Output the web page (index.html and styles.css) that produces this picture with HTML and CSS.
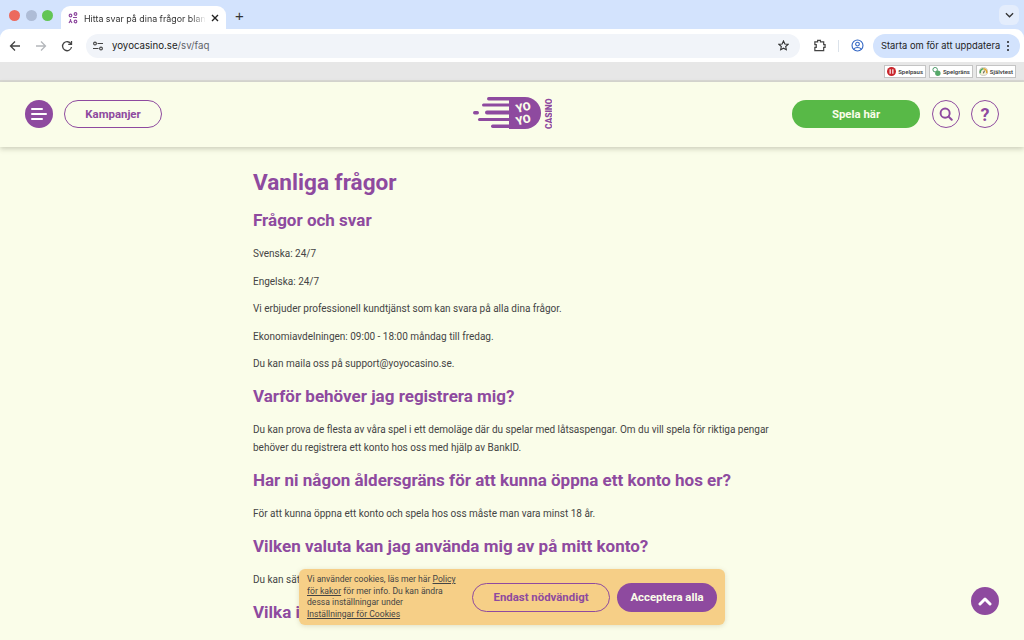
FILE: index.html
```html
<!DOCTYPE html>
<html lang="sv">
<head>
<meta charset="utf-8">
<title>Vanliga frågor</title>
<link rel="stylesheet" href="styles.css">
</head>
<body>
<div class="tabstrip">
  <div class="lights"><i class="light red"></i><i class="light grey"></i><i class="light green"></i></div>
  <div class="tab">
    <svg class="favicon" viewBox="0 0 10 12" width="10" height="12"><g fill="none" stroke="#8e4a9f" stroke-width="1.200"><circle cx="2.500" cy="3.500" r="1.300"/><circle cx="7.500" cy="2" r="1.300"/><circle cx="7.500" cy="9.500" r="1.300"/><path d="M1 11l1.500-2.500L4 11M2.500 8.500V7M5 5.500h4"/></g></svg>
    <span class="tabtitle">Hitta svar på dina frågor blan</span>
    <svg class="tabclose" viewBox="0 0 8 8" width="8" height="8"><path d="M1 1l6 6M7 1L1 7" stroke="#222" stroke-width="1.400"/></svg>
  </div>
  <span class="newtab">+</span>
  <span class="spacer"></span>
  <span class="tabmenu"><svg viewBox="0 0 10 6" width="9" height="6"><path d="M1 1l4 4 4-4" fill="none" stroke="#333" stroke-width="1.400"/></svg></span>
</div>
<div class="toolbar">
  <svg class="navicon" viewBox="0 0 12 12" width="12" height="12"><path d="M11 6H2M6 1.500L1.500 6 6 10.500" fill="none" stroke="#444" stroke-width="1.300"/></svg>
  <svg class="navicon" viewBox="0 0 12 12" width="12" height="12"><path d="M1 6h9M6 1.500L10.500 6 6 10.500" fill="none" stroke="#b4b7bb" stroke-width="1.300"/></svg>
  <svg class="navicon" viewBox="0 0 12 12" width="12" height="12"><path d="M10 4A4.500 4.500 0 1 0 10.500 7M10.500 1v3.300H7.200" fill="none" stroke="#444" stroke-width="1.300"/></svg>
  <div class="omnibox">
    <svg class="tune" viewBox="0 0 12 10" width="12" height="10"><g fill="none" stroke="#444" stroke-width="1.100"><circle cx="3" cy="2.500" r="1.400"/><circle cx="9" cy="7.500" r="1.400"/><path d="M5.500 2.500H11M1 7.500h5.500"/></g></svg>
    <span class="url">yoyocasino.se<span class="urlpath">/sv/faq</span></span>
    <span class="spacer"></span>
    <svg viewBox="0 0 12 12" width="11" height="11"><path d="M6 1l1.500 3.300 3.500.4-2.600 2.400.7 3.500L6 8.900l-3.100 1.700.7-3.500L1 4.700l3.500-.4z" fill="none" stroke="#333" stroke-width="1.200"/></svg>
  </div>
  <svg class="ext" viewBox="0 0 14 14" width="13" height="13"><path d="M2 3h3V1.500h3V3h3.500v3H13v3h-1.500v3.500H2V9h1.500V6H2z" fill="none" stroke="#444" stroke-width="1.300"/></svg>
  <i class="sep"></i>
  <svg class="profile" viewBox="0 0 14 14" width="13" height="13"><g fill="none" stroke="#3367c4" stroke-width="1.200"><circle cx="7" cy="7" r="5.900"/><circle cx="7" cy="5.500" r="2"/><path d="M3 11c1.500-2.400 6.500-2.400 8 0"/></g></svg>
  <div class="update"><span>Starta om för att uppdatera</span><b class="dots"><i></i><i></i><i></i></b></div>
</div>
<div class="gambling">
  <span class="gbadge"><svg viewBox="0 0 10 10" width="9" height="9"><circle cx="5" cy="5" r="5" fill="#c9252c"/><path d="M3.500 2.500v5M6.500 2.500v5" stroke="#fff" stroke-width="1.300"/></svg>Spelpaus</span>
  <span class="gbadge"><svg viewBox="0 0 10 10" width="9" height="9"><circle cx="3.500" cy="3" r="2.500" fill="none" stroke="#3b8f5b"/><circle cx="6.500" cy="7" r="3" fill="#55a868"/></svg>Spelgräns</span>
  <span class="gbadge"><svg viewBox="0 0 10 10" width="9" height="9"><circle cx="5" cy="5" r="4.500" fill="#f4f0d8" stroke="#aaa" stroke-width=".6"/><path d="M1.500 7a3.800 3.800 0 0 1 3.500-5" fill="none" stroke="#4ba55a" stroke-width="1.600"/><path d="M5 2a3.800 3.800 0 0 1 3.500 5" fill="none" stroke="#e2a52e" stroke-width="1.600"/><path d="M5 7l1-3" stroke="#333"/></svg>Självtest</span>
</div>
<header class="site">
  <div class="siteleft">
    <button class="burger"><i class="l1"></i><i class="l2"></i><i class="l3"></i></button>
    <button class="outline promo">Kampanjer</button>
  </div>
  <div class="logo">
    <svg viewBox="0 0 80 36" width="80" height="36">
      <path d="M37 1h16a16 16 0 0 1 0 32H37z" fill="#8e4a9f"/>
      <g fill="#8e4a9f">
        <rect x="15" y="1" width="26" height="3.500" rx="1.700"/>
        <rect x="10" y="7.500" width="30" height="3" rx="1.500"/>
        <rect x="1" y="15" width="6" height="3.500" rx="1.700"/>
        <rect x="13" y="14.500" width="27" height="4" rx="2"/>
        <rect x="6" y="22" width="33" height="3" rx="1.500"/>
        <rect x="19" y="28.500" width="22" height="3.500" rx="1.700"/>
      </g>
      <text x="45" y="17" class="logotext" transform="rotate(-14 45 17)">YO</text>
      <text x="45" y="29.500" class="logotext" transform="rotate(-14 45 29.500)">YO</text>
      <text x="0" y="0" class="logocasino" transform="translate(79.500 33) rotate(-90)">CASINO</text>
    </svg>
  </div>
  <div class="siteright">
    <button class="play">Spela här</button>
    <button class="round"><svg viewBox="0 0 16 16" width="14" height="14"><circle cx="7" cy="7" r="5.200" fill="none" stroke="#8e4a9f" stroke-width="2.200"/><path d="M11 11l3.500 3.500" stroke="#8e4a9f" stroke-width="2.400" stroke-linecap="round"/></svg></button>
    <button class="round help">?</button>
  </div>
</header>
<main class="content">
  <h1>Vanliga frågor</h1>
  <h2>Frågor och svar</h2>
  <p>Svenska: 24/7</p>
  <p>Engelska: 24/7</p>
  <p>Vi erbjuder professionell kundtjänst som kan svara på alla dina frågor.</p>
  <p>Ekonomiavdelningen: 09:00 - 18:00 måndag till fredag.</p>
  <p>Du kan maila oss på support@yoyocasino.se.</p>
  <h2>Varför behöver jag registrera mig?</h2>
  <p>Du kan prova de flesta av våra spel i ett demoläge där du spelar med låtsaspengar. Om du vill spela för riktiga pengar behöver du registrera ett konto hos oss med hjälp av BankID.</p>
  <h2>Har ni någon åldersgräns för att kunna öppna ett konto hos er?</h2>
  <p>För att kunna öppna ett konto och spela hos oss måste man vara minst 18 år.</p>
  <h2>Vilken valuta kan jag använda mig av på mitt konto?</h2>
  <p>Du kan sätta in och spela i svenska kronor på ditt konto.</p>
  <h2>Vilka insättningsmetoder finns?</h2>
</main>
<aside class="cookie">
  <p>Vi använder cookies, läs mer här <a href="#">Policy för kakor</a> för mer info. Du kan ändra dessa inställningar under<br><a href="#">Inställningar för Cookies</a></p>
  <button class="outline necessary">Endast nödvändigt</button>
  <button class="accept">Acceptera alla</button>
</aside>
<button class="totop"><svg viewBox="0 0 14 9" width="14" height="9"><path d="M2 7l5-5 5 5" fill="none" stroke="#fff" stroke-width="3" stroke-linecap="round" stroke-linejoin="round"/></svg></button>
</body>
</html>
```
FILE: styles.css
```css
* { box-sizing: border-box; }
html, body { height: 100%; }
body { margin: 0; height: 640px; overflow: hidden; background: #fafde9; font-family: Roboto, "Liberation Sans", sans-serif; color: #444; position: relative; }
button { font-family: inherit; cursor: pointer; padding: 0; }
.spacer { flex: 1; }

.tabstrip { height: 37px; background: #d3e3fd; display: flex; align-items: flex-end; padding: 0 5px 8px 9px; }
.lights { display: flex; gap: 5.500px; align-self: center; margin-top: 1px; margin-right: 8px; }
.light { width: 11px; height: 11px; border-radius: 50%; display: block; }
.red { background: #ec6a5e; }
.grey { background: #aebcd6; }
.green { background: #62c554; }
.tab { width: 165px; height: 24px; background: #fff; border-radius: 9px 9px 0 0; display: flex; align-items: center; padding: 0 7px; font-size: 8.900px; color: #333; font-family: Inter, Roboto, sans-serif; position: relative; z-index: 1; margin-bottom: -1px; }
.favicon { flex: none; margin-right: 6px; }
.tabtitle { width: 122px; overflow: hidden; white-space: nowrap; flex: none; -webkit-mask-image: linear-gradient(to right, #000 88%, transparent); mask-image: linear-gradient(to right, #000 88%, transparent); }
.tabclose { flex: none; margin-left: 5px; }
.newtab { align-self: center; margin-left: 9px; font-size: 15px; color: #333; margin-top: 1px; font-family: "Liberation Sans", sans-serif; line-height: 1; }
.tabmenu { align-self: center; width: 20px; height: 20px; border-radius: 6px; background: #e4edfc; display: flex; align-items: center; justify-content: center; margin-top: 1px; }

.toolbar { height: 33px; background: #fff; border-radius: 9px 9px 0 0; margin-top: -8px; position: relative; display: flex; align-items: center; padding: 0 4px 0 9px; }
.navicon { flex: none; margin-right: 14px; }
.navicon:nth-child(3) { margin-right: 13px; }
.omnibox { width: 714px; height: 24px; background: #f1f4f9; border-radius: 12px; display: flex; align-items: center; padding: 0 11px 0 6px; }
.tune { margin-right: 8px; }
.url { font-size: 9.700px; color: #222; font-family: Inter, Roboto, sans-serif; }
.urlpath { color: #5f6368; }
.ext { flex: none; margin-left: 13px; }
.sep { width: 1px; height: 12px; background: #dbe2ea; margin-left: 12px; }
.profile { flex: none; margin-left: 12px; }
.update { width: 147px; height: 24px; border-radius: 12px; background: #d3e3fd; margin-left: 9px; display: flex; align-items: center; padding-left: 8px; font-size: 9.350px; color: #222; font-family: Inter, Roboto, sans-serif; white-space: nowrap; }
.dots { display: flex; flex-direction: column; gap: 2px; margin-left: auto; margin-right: 11px; }
.dots i { display: block; width: 2px; height: 2px; border-radius: 50%; background: #222; }

.gambling { height: 20px; background: #e7e7e7; border-bottom: 2px solid #d9d9d4; display: flex; align-items: center; justify-content: flex-end; gap: 3px; padding-right: 8px; padding-top: 1px; }
.gbadge { height: 13px; background: #fff; border: 1px solid #c4c4c4; display: flex; align-items: center; gap: 2px; padding: 0 2px; font-size: 6px; font-weight: 500; color: #333; white-space: nowrap; }

.site { height: 65px; background: #fafde9; box-shadow: 0 2px 5px rgba(70, 70, 50, .25); display: flex; align-items: center; justify-content: space-between; padding: 0 25px 1px; position: relative; }
.siteleft { display: flex; align-items: center; gap: 11px; width: 300px; }
.burger { width: 28px; height: 28px; border-radius: 50%; background: #8e4a9f; border: 0; display: flex; flex-direction: column; justify-content: center; gap: 3px; padding-left: 6px; }
.burger i { display: block; height: 2px; background: #fff; border-radius: 1px; }
.l1 { width: 12px; }
.l2 { width: 16px; }
.l3 { width: 12px; }
.outline { background: transparent; border: 1px solid #8e4a9f; color: #8e4a9f; font-weight: 700; border-radius: 15px; }
.promo { width: 98px; height: 28px; font-size: 11.400px; }
.logo { width: 80px; height: 36px; margin-left: -1px; }
.logotext { font: 900 11.500px Roboto, sans-serif; fill: #fafde9; }
.logocasino { font: 900 8.500px Roboto, sans-serif; fill: #8e4a9f; letter-spacing: -.1px; }
.siteright { display: flex; align-items: center; justify-content: flex-end; width: 300px; gap: 11px; }
.play { width: 128px; height: 28px; border: 0; border-radius: 15px; background: #58b947; color: #fafde9; font-size: 11.400px; font-weight: 700; margin-right: 1px; }
.round { width: 28px; height: 28px; border-radius: 50%; border: 1px solid #8e4a9f; background: transparent; display: flex; align-items: center; justify-content: center; }
.help { color: #8e4a9f; font-weight: 700; font-size: 18px; }

.content { width: 520px; margin-left: 253px; padding-top: 1px; }
h1 { font-size: 22.600px; line-height: 28px; color: #8e4a9f; font-weight: 700; margin: 21px 0 12px; }
h2 { font-size: 17px; line-height: 22px; color: #8e4a9f; font-weight: 700; margin: 0 0 14px; }
.content p { font-size: 10px; line-height: 18px; color: #444; margin: 0 0 9.500px; }
.content p + h2 { margin-top: 12px; }

.cookie { position: absolute; left: 299px; top: 569px; width: 426px; height: 56px; background: #f6cf87; border-radius: 6px; box-shadow: 0 1px 5px rgba(120, 100, 50, .2); display: flex; align-items: center; padding: 0 8px; }
.cookie p { width: 152px; margin: 0 13px 0 0; font-size: 8.600px; line-height: 11.500px; color: #444; flex: none; }
.cookie a { color: #444; }
.necessary { width: 138px; height: 29px; font-size: 11.400px; margin-right: 7px; flex: none; }
.accept { width: 100px; height: 29px; border: 0; border-radius: 15px; background: #8e4a9f; color: #fafde9; font-size: 11.400px; font-weight: 700; flex: none; }
.totop { position: absolute; left: 971px; top: 587px; width: 28px; height: 28px; border-radius: 50%; background: #8e4a9f; border: 0; display: flex; align-items: center; justify-content: center; }
```
